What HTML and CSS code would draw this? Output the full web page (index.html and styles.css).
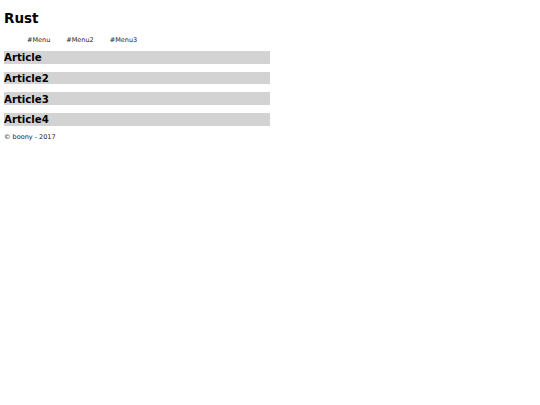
FILE: index.html
```html
<!DOCTYPE html>
<html>
<head>
<meta charset="utf-8">
<link rel="stylesheet" href="styles.css">
<title>Rust</title>
</head>
<body>
<header class="site-header">
  <h1 class="site-title">Rust</h1>
  <nav class="menu">
    <a class="menu-item" href="#Menu">#Menu</a>
    <a class="menu-item" href="#Menu2">#Menu2</a>
    <a class="menu-item" href="#Menu3">#Menu3</a>
  </nav>
</header>
<main class="content">
  <h2 class="article-title">Article</h2>
  <h2 class="article-title">Article2</h2>
  <h2 class="article-title">Article3</h2>
  <h2 class="article-title">Article4</h2>
</main>
<footer class="site-footer">© boony - 2017</footer>
</body>
</html>
```
FILE: styles.css
```css
html, body {
  margin: 0;
  padding: 0;
  background: #fff;
}
body {
  padding: 4px;
  font-family: "DejaVu Sans", Verdana, sans-serif;
  color: #000;
  width: 266px;
}
.site-title {
  font-size: 13.5px;
  font-weight: bold;
  margin: 6px 0 0 0;
  line-height: 16px;
}
.menu {
  display: flex;
  gap: 16px;
  padding-left: 23px;
  margin-top: 10px;
  font-size: 6.5px;
  line-height: 9px;
  color: #222;
}
.menu-item {
  color: #222;
  text-decoration: none;
}
.content {
  margin-top: 6px;
  display: flex;
  flex-direction: column;
  gap: 8px;
}
.article-title {
  margin: 0;
  background: #d3d3d3;
  font-size: 10.2px;
  line-height: 11.5px;
  font-weight: bold;
  padding-top: 1.2px;
}
.site-footer {
  margin-top: 7.5px;
  font-size: 6.5px;
  line-height: 9px;
  color: #222;
}
```
